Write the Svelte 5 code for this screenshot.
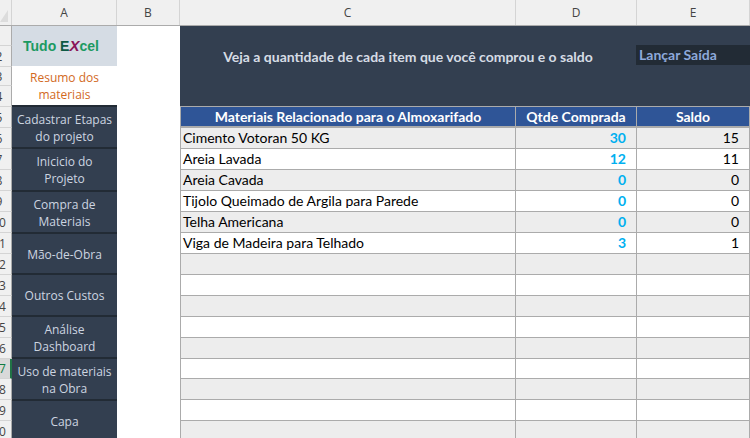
<script>
  const rowHeights = [20,21,19,21,21,21,21,21,21,21,21,21,21,21,21,21,20,21,21,21];
  const menu = [
    { t: ['Cadastrar Etapas', 'do projeto'], h: 42 },
    { t: ['Inicicio do', 'Projeto'], h: 43 },
    { t: ['Compra de', 'Materiais'], h: 42 },
    { t: ['Mão-de-Obra'], h: 41 },
    { t: ['Outros Custos'], h: 42 },
    { t: ['Análise', 'Dashboard'], h: 42 },
    { t: ['Uso de materiais', 'na Obra'], h: 42 },
    { t: ['Capa'], h: 41 }
  ];
  const items = [
    ['Cimento Votoran 50 KG', 30, 15],
    ['Areia Lavada', 12, 11],
    ['Areia Cavada', 0, 0],
    ['Tijolo Queimado de Argila para Parede', 0, 0],
    ['Telha Americana', 0, 0],
    ['Viga de Madeira para Telhado', 3, 1],
    ['', '', ''], ['', '', ''], ['', '', ''], ['', '', ''],
    ['', '', ''], ['', '', ''], ['', '', ''], ['', '', ''], ['', '', '']
  ];
</script>

<div class="sheet">
  <div class="colhead">
    <div class="corner"><span class="tri"></span></div>
    <div class="ch a">A</div>
    <div class="ch b">B</div>
    <div class="ch c">C</div>
    <div class="ch d">D</div>
    <div class="ch e">E</div>
  </div>
  <div class="body">
    <div class="rows">
      {#each rowHeights as h, i}
        <div class="rn" class:sel={i === 16} style="height:{h}px"><span class:hide={i === 0}>{i + 1}</span></div>
      {/each}
    </div>
    <aside class="nav">
      <div class="logo"><div><span class="g">Tudo&nbsp;</span><span class="dk">E</span><span class="x">X</span><span class="g">cel</span></div></div>
      <div class="active">Resumo dos<br />materiais</div>
      {#each menu as m}
        <div class="mi" style="height:{m.h}px">
          {#each m.t as l}<div>{l}</div>{/each}
        </div>
      {/each}
    </aside>
    <div class="colb"></div>
    <main class="main">
      <div class="banner">
        <div class="title">Veja a quantidade de cada item que você comprou e o saldo</div>
        <div class="btn">Lançar Saída</div>
      </div>
      <div class="tr thr">
        <div class="td">Materiais Relacionado para o Almoxarifado</div>
        <div class="td">Qtde Comprada</div>
        <div class="td">Saldo</div>
      </div>
      {#each items as it, i}
        <div class="tr" class:alt={i % 2 === 0} class:short={i === 11}>
          <div class="td name">{it[0]}</div>
          <div class="td qty">{it[1]}</div>
          <div class="td bal">{it[2]}</div>
        </div>
      {/each}
    </main>
  </div>
</div>

<style>
  :global(body) { margin: 0; background: #fff; overflow: hidden; }
  .sheet { width: 750px; height: 438px; overflow: hidden; font-family: "Open Sans", "Noto Sans", sans-serif; font-size: 12px; color: #000; }
  .colhead { display: flex; height: 26px; background: #f0f0f0; box-sizing: border-box; border-bottom: 1px solid #ababab; color: #444; }
  .corner { width: 12px; position: relative; border-right: 1px solid #d4d4d4; box-sizing: border-box; }
  .tri { position: absolute; left: 0; bottom: 3px; border-style: solid; border-width: 0 0 12px 8px; border-color: transparent transparent #dcdcdc transparent; }
  .ch { display: flex; align-items: center; justify-content: center; box-sizing: border-box; border-right: 1px solid #d4d4d4; font-size: 12px; }
  .a { width: 105px; } .b { width: 63px; } .c { width: 336px; } .d { width: 121px; } .e { width: 113px; }
  .body { display: flex; }
  .rows { width: 12px; flex: none; background: #f0f0f0; }
  .rn { box-sizing: border-box; border-bottom: 1px solid #d4d4d4; border-right: 1px solid #ababab; display: flex; align-items: center; overflow: hidden; color: #444; font-size: 12px; }
  .rn span { flex: none; width: 24px; margin-left: -13px; text-align: center; }
  .rn span.hide { visibility: hidden; }
  .rn.sel { background: #d9d9d9; color: #107c41; border-right: 2px solid #217346; }
  .nav { width: 105px; flex: none; color: #cdd5e0; text-align: center; line-height: 17px; }
  .logo { height: 40px; box-sizing: border-box; padding-right: 7px; background: #d5dce4; display: flex; align-items: center; justify-content: center; font-family: "Liberation Sans", sans-serif; font-weight: 700; font-size: 14px; }
  .g { color: #1c9a62; white-space: pre; } .dk { color: #0e5a43; } .x { color: #8a1458; font-style: italic; font-size: 15px; }
  .active { height: 39px; background: #fff; color: #d2691e; display: flex; align-items: center; justify-content: center; }
  .mi { box-sizing: border-box; background: #333f50; border-top: 2px solid #222b35; padding-top: 1px; display: flex; flex-direction: column; justify-content: center; white-space: nowrap; }
  .colb { width: 63px; flex: none; background: #fff; }
  .main { flex: 1; min-width: 0; font-family: Lato, "Open Sans", sans-serif; font-size: 14px; }
  .banner { height: 80px; background: #333f50; position: relative; font-weight: 700; color: #d6dce5; }
  .title { width: 456px; text-align: center; padding-top: 22px; box-sizing: border-box; height: 80px; line-height: 17px; }
  .btn { position: absolute; left: 456px; top: 19px; width: 114px; height: 20px; background: #222b35; color: #8ea9db; line-height: 20px; padding-left: 3px; box-sizing: border-box; }
  .tr { display: grid; grid-template-columns: 335px 121px 113px; height: 21px; box-sizing: border-box; border-bottom: 1px solid #ababab; border-left: 1px solid #ababab; background: #fff; }
  .tr.alt { background: #ededed; }
  .tr.short { height: 20px; }
  .td { border-right: 1px solid #ababab; box-sizing: border-box; padding: 0 2px; line-height: 20px; white-space: nowrap; overflow: hidden; }
  .thr { background: #2f5597; color: #fff; font-weight: 700; border-top: 1px solid #ababab; border-bottom: 2px solid #ababab; height: 22px; }
  .thr .td { text-align: center; line-height: 19px; }
  .qty { text-align: right; font-weight: 700; color: #00b0f0; padding-right: 10px; }
  .bal { text-align: right; padding-right: 10px; }
</style>
